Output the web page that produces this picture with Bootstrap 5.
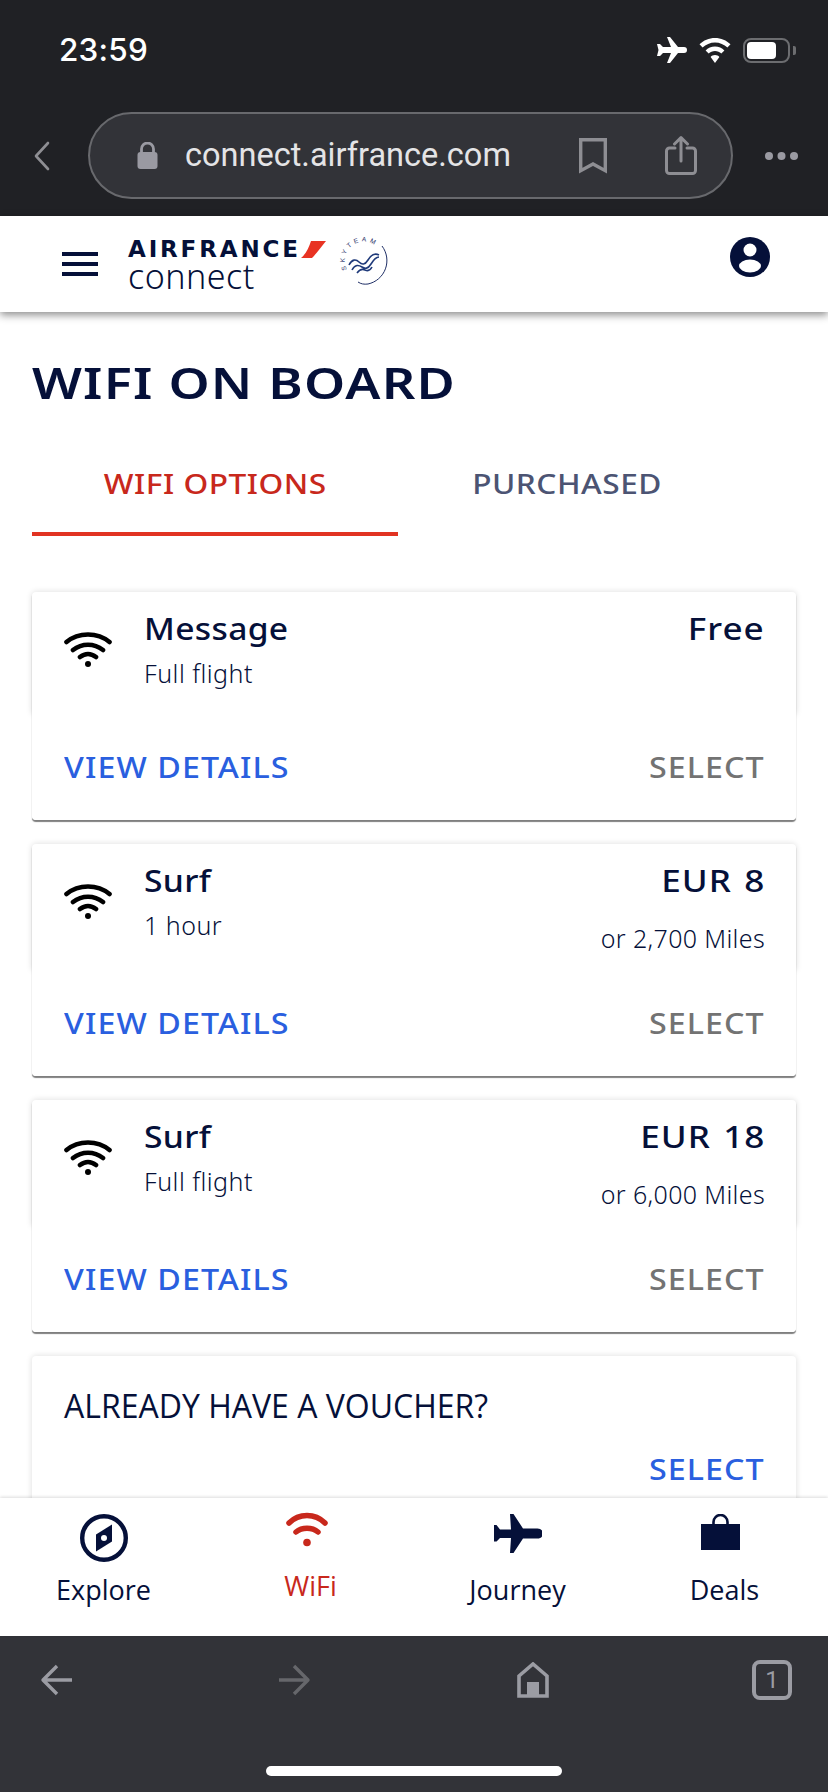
<!DOCTYPE html>
<html lang="en">
<head>
<meta charset="utf-8">
<title>WiFi on board</title>
<link href="https://cdn.jsdelivr.net/npm/bootstrap@5.3.0/dist/css/bootstrap.min.css" rel="stylesheet">
<style>
html,body{margin:0;height:100%;background:#fff}
.af-page{height:1792px;width:828px;overflow:hidden;color:#051039;font-family:"Noto Sans","Open Sans",sans-serif}
/* browser chrome */
.chrome-top{height:216px;background:#202125;flex:none}
.status-row{height:112px;padding:37px 32px 0 59px;align-items:flex-start}
.clock{font-family:Inter,Roboto,sans-serif;font-weight:500;font-size:31.5px;line-height:25px;color:#fff;letter-spacing:.2px}
.wifi-top{margin-left:12px}
.batt-shell{width:47px;height:25px;border:2px solid #6c6d70;border-radius:8px;padding:2px;margin-left:12px}
.batt-fill{width:29px;height:17px;background:#fff;border-radius:4px}
.batt-nub{width:3px;height:9px;background:#6c6d70;border-radius:0 2px 2px 0;margin-left:3px}
.url-row{padding-left:33px;height:87px}
.url-pill{width:645px;height:87px;margin-left:37px;border:2px solid #68696d;border-radius:44px;background:#323338;padding-left:47px}
.url-text{font-family:Roboto,sans-serif;font-size:32.5px;color:#e4e4e6;margin-left:27px;line-height:1;width:394px}
.share-gap{margin-left:58px}
.dots{margin-left:32px}
/* app bar */
.app-bar{height:96px;background:#fff;box-shadow:0 3px 8px rgba(0,0,0,.45);padding:0;position:relative;z-index:3;flex:none;align-items:flex-start;flex-wrap:nowrap;justify-content:flex-start}
.burger{width:36px;margin:36px 30px 0 62px}
.burger span{display:block;height:4px;background:#051039;margin-bottom:6px}
.logo-box{margin-top:22px;width:210px}
.logo-top{font-family:"DejaVu Sans",sans-serif;font-weight:700;font-size:23px;letter-spacing:2.85px;line-height:22px;color:#051039;white-space:nowrap}
.logo-sub{font-family:"Noto Sans",sans-serif;font-weight:300;font-size:34px;line-height:32px;color:#051039;letter-spacing:.5px}
.sky-mark{margin:19px 0 0 0}
.user-ic{margin:21px 58px 0 auto}
/* content */
.af-main{flex:1 1 0;overflow:hidden;padding:0 32px;background:#fff;min-height:0}
.page-ttl{font-family:"Noto Sans",sans-serif;font-weight:600;font-size:44px;line-height:60px;letter-spacing:1px;margin:40px 0 0;color:#051039;white-space:nowrap;transform:scaleX(1.19);transform-origin:left center;width:max-content}
.tab-row{margin-top:32px;flex-wrap:nowrap}
.tab-item{height:92px;line-height:60px;padding:10px 0 0;text-align:center;font-weight:500;font-size:27px;border-bottom:4px solid transparent;color:#4c5473;letter-spacing:.45px}
.tab-item span{display:inline-block;transform:scaleX(1.17)}
.tab-item.on{width:366px;color:#c8281c;border-bottom-color:#e13322}
.tab-item.off{width:338px}
.tab-row a:hover{color:inherit}
.opt-card{margin-top:24px;border:0;border-radius:4px;box-shadow:0 2px 1px rgba(0,0,0,.5);background:#fff}
.opt-card.first{margin-top:56px}
.opt-top{padding:17px 31px 0 32px;border-radius:4px 4px 0 0;box-shadow:0 0 6px rgba(0,0,0,.14);background:#fff}
.opt-ic{margin-top:23px;margin-right:32px;flex:none}
.opt-name{font-weight:500;font-size:30px;line-height:40px;letter-spacing:.3px;color:#051039;transform:scaleX(1.12);transform-origin:left center;width:max-content}
.opt-sub{font-weight:300;font-size:25px;line-height:34px;margin-top:7px;padding-bottom:24px;letter-spacing:.5px;color:#051039}
.opt-price{font-weight:500;font-size:30px;line-height:40px;letter-spacing:.8px;word-spacing:2px;color:#051039;text-align:right;transform:scaleX(1.17);transform-origin:right center}
.opt-alt{font-weight:300;font-size:25px;line-height:34px;margin-top:20px;padding-bottom:15px;text-align:right;letter-spacing:.35px;color:#051039}
.opt-act{height:106px;padding:0 31px 0 32px;background:#fff;position:relative;border-radius:0 0 4px 4px}
.act{display:inline-block;font-weight:500;font-size:28px;letter-spacing:.95px;text-decoration:none;line-height:40px;transform:scaleX(1.15)}
.act-l{transform-origin:left center}
.act-r{transform-origin:right center}
.act.blue{color:#2a5fdf}
.act.grey{color:#737373}
.voucher-card{margin-top:24px;border:0;border-radius:4px 4px 0 0;box-shadow:0 0 6px rgba(0,0,0,.14);padding:30px 31px 40px 32px}
.voucher-ttl{font-family:"Open Sans",sans-serif;font-size:32px;line-height:40px;color:#051039}
.voucher-act{margin-top:23px}
/* bottom tabs */
.tabbar{height:138px;background:#fff;box-shadow:0 -1px 3px rgba(0,0,0,.14);position:relative;z-index:2;flex:none;padding-top:14px}
.tabbar-cell{text-align:center;font-family:"Open Sans",sans-serif;font-size:27px;line-height:36px;color:#051039}
.tabbar-ic{height:60px;padding-top:2px}
.tabbar-ic svg{display:block;margin:0 auto}
.tabbar-cell.on{color:#c8281c}
.tabbar-cell.on .tabbar-ic{height:58px;margin-top:-2px;padding-right:8px}
.tabbar-cell.bag .tabbar-ic{padding-right:8px}
/* browser bottom */
.chrome-bot{height:156px;background:#323338;flex:none;padding-top:24px}
.bot-row{height:40px;padding-left:40px}
.b-2{margin-left:207px}
.b-3{margin-left:206px}
.b-4{margin-left:203px}
.tab-count{width:40px;height:40px;border:4px solid #9b9ca3;border-radius:8px;color:#9b9ca3;font-family:Roboto,sans-serif;font-size:24px;line-height:32px;text-align:center}
.home-pill{width:296px;height:10px;background:#fff;border-radius:5px;margin:66px 0 0 266px}
</style>
</head>
<body>
<div class="af-page d-flex flex-column">

  <div class="chrome-top">
    <div class="status-row d-flex justify-content-between">
      <div class="clock">23:59</div>
      <div class="d-flex align-items-center">
        <svg width="30" height="26" viewBox="0 0 30 26" fill="#fff"><path d="M10 0h3l8 10h6c2 0 3 1.300 3 3s-1 3-3 3h-6l-8 10h-3l4-10H6l-3 3H0l1.500-6L0 7h3l3 3h8z"/></svg>
        <svg class="wifi-top" width="32" height="25" viewBox="0 0 32 25" fill="#fff"><path d="M16 0c6 0 11.500 2.400 15.500 6.300L28.400 9.500C25.200 6.400 20.800 4.400 16 4.400S6.800 6.400 3.600 9.500L.5 6.300C4.500 2.400 10 0 16 0zm0 8.600c3.700 0 7 1.500 9.400 3.800l-3.100 3.200c-1.600-1.600-3.800-2.600-6.300-2.600s-4.700 1-6.300 2.600l-3.100-3.200C9 10.100 12.300 8.600 16 8.600zm0 8.500c1.800 0 3.300.7 4.400 1.800L16 25l-4.400-6.100c1.100-1.100 2.600-1.800 4.400-1.800z"/></svg>
        <div class="batt-shell"><div class="batt-fill"></div></div>
        <div class="batt-nub"></div>
      </div>
    </div>
    <div class="url-row d-flex align-items-center">
      <svg width="18" height="30" viewBox="0 0 18 30" fill="none" stroke="#8e8e93" stroke-width="2.600" stroke-linecap="round" stroke-linejoin="round"><path d="M15 2 3 15l12 13"/></svg>
      <div class="url-pill d-flex align-items-center">
        <svg width="21" height="27" viewBox="0 0 21 27"><path d="M4.500 11V7a6 6 0 0 1 12 0v4" fill="none" stroke="#9a9aa2" stroke-width="2.800"/><rect x="0.500" y="10" width="20" height="17" rx="3" fill="#9a9aa2"/></svg>
        <div class="url-text">connect.airfrance.com</div>
        <svg width="28" height="36" viewBox="0 0 28 36" fill="none" stroke="#8e8e93" stroke-width="3.400"><path d="M1.700 1.700h24.600v31L14 26 1.700 32.700z"/></svg>
        <svg class="share-gap" width="32" height="39" viewBox="0 0 32 39" fill="none" stroke="#8e8e93" stroke-width="3" stroke-linecap="round" stroke-linejoin="round"><path d="M10 12H4.500a3 3 0 0 0-3 3v19.500a3 3 0 0 0 3 3h23a3 3 0 0 0 3-3V15a3 3 0 0 0-3-3H22"/><path d="M16 25V2M9.500 8 16 1.600 22.500 8"/></svg>
      </div>
      <svg class="dots" width="33" height="10" viewBox="0 0 33 10" fill="#9a9aa2"><circle cx="4" cy="5" r="4"/><circle cx="16.500" cy="5" r="4"/><circle cx="29" cy="5" r="4"/></svg>
    </div>
  </div>

  <nav class="navbar app-bar">
    <div class="burger"><span></span><span></span><span></span></div>
    <div class="logo-box">
      <div class="logo-top d-flex align-items-center">AIRFRANCE<svg width="25" height="17" viewBox="0 0 25 17"><path d="M10 0h15C20 6 15 13 11 17H0C5 13 8 6 10 0z" fill="#e83323"/></svg></div>
      <div class="logo-sub">connect</div>
    </div>
    <svg class="sky-mark" width="50" height="50" viewBox="0 0 50 50">
      <defs><path id="skyarc" d="M9 34.500A19 19 0 0 1 40 13"/></defs>
      <text font-family="Liberation Sans,sans-serif" font-size="6.500" letter-spacing="3.100" fill="#1f2f66"><textPath href="#skyarc">SKYTEAM</textPath></text>
      <path d="M44 11a24 24 0 0 1-14 38c-4 .5-7 0-10-2" fill="none" stroke="#1f2f66" stroke-width="1"/>
      <path d="M11 30c3-6 7-6 10-3s6 3 9-2 7-7 11-5M14 35c3-6 7-5 10-3s6 2 9-3 6-7 8-7M19 38c3-4 6-4 8-3s5 1 7-3" fill="none" stroke="#1f3a7a" stroke-width="1.600"/>
    </svg>
    <svg class="user-ic" width="40" height="40" viewBox="0 0 40 40"><circle cx="20" cy="20" r="20" fill="#051039"/><circle cx="20" cy="13" r="6.500" fill="#fff"/><ellipse cx="20" cy="29" rx="11" ry="6.500" fill="#fff"/></svg>
  </nav>

  <main class="af-main">
    <h1 class="page-ttl">WIFI ON BOARD</h1>
    <div class="nav tab-row">
      <a class="nav-link tab-item on" href="#"><span>WIFI OPTIONS</span></a>
      <a class="nav-link tab-item off" href="#"><span>PURCHASED</span></a>
    </div>

    <div class="card opt-card first">
      <div class="opt-top d-flex">
        <svg class="opt-ic" width="48" height="35" viewBox="0 0 48 35" fill="none" stroke="#000" stroke-width="4.600" stroke-linecap="round"><path d="M2.500 10c12-10 31-10 43 0M9 18c9-7 21-7 30 0M16 25c5-4 11-4 16 0"/><circle cx="24" cy="32" r="3" fill="#000" stroke="none"/></svg>
        <div class="flex-grow-1"><div class="opt-name">Message</div><div class="opt-sub">Full flight</div></div>
        <div class="opt-price">Free</div>
      </div>
      <div class="opt-act d-flex justify-content-between align-items-center">
        <a class="act act-l blue" href="#">VIEW DETAILS</a><a class="act act-r grey" href="#">SELECT</a>
      </div>
    </div>

    <div class="card opt-card">
      <div class="opt-top d-flex">
        <svg class="opt-ic" width="48" height="35" viewBox="0 0 48 35" fill="none" stroke="#000" stroke-width="4.600" stroke-linecap="round"><path d="M2.500 10c12-10 31-10 43 0M9 18c9-7 21-7 30 0M16 25c5-4 11-4 16 0"/><circle cx="24" cy="32" r="3" fill="#000" stroke="none"/></svg>
        <div class="flex-grow-1"><div class="opt-name">Surf</div><div class="opt-sub">1 hour</div></div>
        <div><div class="opt-price">EUR 8</div><div class="opt-alt">or 2,700 Miles</div></div>
      </div>
      <div class="opt-act d-flex justify-content-between align-items-center">
        <a class="act act-l blue" href="#">VIEW DETAILS</a><a class="act act-r grey" href="#">SELECT</a>
      </div>
    </div>

    <div class="card opt-card">
      <div class="opt-top d-flex">
        <svg class="opt-ic" width="48" height="35" viewBox="0 0 48 35" fill="none" stroke="#000" stroke-width="4.600" stroke-linecap="round"><path d="M2.500 10c12-10 31-10 43 0M9 18c9-7 21-7 30 0M16 25c5-4 11-4 16 0"/><circle cx="24" cy="32" r="3" fill="#000" stroke="none"/></svg>
        <div class="flex-grow-1"><div class="opt-name">Surf</div><div class="opt-sub">Full flight</div></div>
        <div><div class="opt-price">EUR 18</div><div class="opt-alt">or 6,000 Miles</div></div>
      </div>
      <div class="opt-act d-flex justify-content-between align-items-center">
        <a class="act act-l blue" href="#">VIEW DETAILS</a><a class="act act-r grey" href="#">SELECT</a>
      </div>
    </div>

    <div class="card voucher-card">
      <div class="voucher-ttl">ALREADY HAVE A VOUCHER?</div>
      <div class="voucher-act text-end"><a class="act act-r blue" href="#">SELECT</a></div>
    </div>
  </main>

  <div class="tabbar">
    <div class="row g-0">
      <div class="col-3 tabbar-cell">
        <div class="tabbar-ic"><svg width="48" height="48" viewBox="0 0 48 48"><circle cx="24" cy="24" r="21.800" fill="none" stroke="#051039" stroke-width="4.400"/><path d="M32 10.500 16 20.500v17l16-10z" fill="#051039"/><circle cx="24" cy="24" r="3" fill="#fff"/></svg></div>
        Explore
      </div>
      <div class="col-3 tabbar-cell on">
        <div class="tabbar-ic"><svg width="42" height="35" viewBox="0 0 42 35" fill="none" stroke="#c8281c" stroke-width="5.500" stroke-linecap="round"><path d="M3 11c10-10 26-10 36 0M10 20c6-5 16-5 22 0"/><circle cx="21" cy="30.500" r="3.800" fill="#c8281c" stroke="none"/></svg></div>
        WiFi
      </div>
      <div class="col-3 tabbar-cell">
        <div class="tabbar-ic"><svg width="48" height="39" viewBox="0 0 48 39" fill="#051039"><path d="M0 11h2.500L6 15.500h11L16 0h3.500l9.500 14.500h14.500c3 0 5.500 2.200 5.500 5s-2.500 5-5.500 5H29L19.500 39H16l1-15H6l-3.500 3.500H0z"/></svg></div>
        Journey
      </div>
      <div class="col-3 tabbar-cell bag">
        <div class="tabbar-ic"><svg width="39" height="36" viewBox="0 0 39 36"><path d="M12.500 11V8a7 7 0 0 1 14 0v3" fill="none" stroke="#051039" stroke-width="2.600"/><rect y="10" width="39" height="26" fill="#051039"/></svg></div>
        Deals
      </div>
    </div>
  </div>

  <div class="chrome-bot">
    <div class="bot-row d-flex align-items-center">
      <svg width="32" height="32" viewBox="0 0 32 32" fill="none" stroke="#9b9ca3" stroke-width="3.400" stroke-linejoin="round"><path d="M32 16H3M17 2 3 16l14 14"/></svg>
      <svg class="b-2" width="32" height="32" viewBox="0 0 32 32" fill="none" stroke="#66676b" stroke-width="3.400" stroke-linejoin="round"><path d="M0 16h29M15 2l14 14-14 14"/></svg>
      <svg class="b-3" width="32" height="36" viewBox="0 0 32 36"><path d="M2 34V14L16 2l14 12v20z" fill="none" stroke="#9b9ca3" stroke-width="3.600"/><rect x="10" y="20" width="12" height="14" fill="#9b9ca3"/></svg>
      <div class="tab-count b-4">1</div>
    </div>
    <div class="home-pill"></div>
  </div>

</div>
<script src="https://cdn.jsdelivr.net/npm/bootstrap@5.3.0/dist/js/bootstrap.bundle.min.js"></script>
</body>
</html>
